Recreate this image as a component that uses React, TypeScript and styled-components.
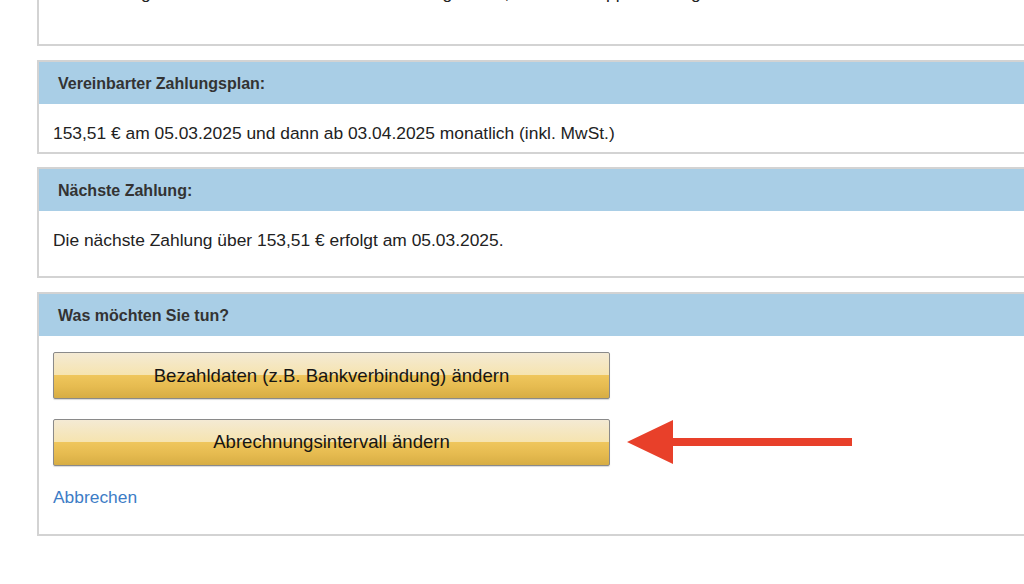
import { createGlobalStyle, styled } from "styled-components";

const GlobalStyle = createGlobalStyle`
    html, body {
        margin: 0;
        padding: 0;
        background: #ffffff;
        overflow: hidden;
    }
    body {
        font-family: "Liberation Sans", Arial, sans-serif;
        color: #222222;
    }
`;

const Page = styled.div`
    width: 1100px;
    margin-left: 37px;
    margin-top: -18px;
    display: flex;
    flex-direction: column;
`;

const Panel = styled.section<{ $gap?: number }>`
    border: 2px solid #d3d3d3;
    border-right: none;
    background: #ffffff;
    margin-top: ${(p) => p.$gap ?? 0}px;
`;

const PanelHeader = styled.div`
    height: 42px;
    box-sizing: border-box;
    padding: 2px 0 0 19px;
    background: #a9cee6;
    display: flex;
    align-items: center;
    font-size: 16px;
    font-weight: bold;
    color: #333333;
`;

const PanelBody = styled.div<{ $top?: number; $bottom?: number }>`
    padding: ${(p) => p.$top ?? 20}px 14px ${(p) => p.$bottom ?? 10}px;
    font-size: 17.4px;
    line-height: 18px;
    color: #222222;
    white-space: nowrap;
`;

const Actions = styled.div`
    display: flex;
    flex-direction: column;
    gap: 19px;
`;

const ActionRow = styled.div`
    display: flex;
    align-items: center;
    gap: 17px;
`;

const GoldButton = styled.button`
    width: 557px;
    height: 47px;
    border: 1px solid #8a8a8a;
    border-radius: 2px;
    background: linear-gradient(
        to bottom,
        #f4ead4 0%,
        #f6e4b0 48%,
        #efc65c 50%,
        #e6bb50 75%,
        #d7ad44 100%
    );
    box-shadow: 0 1px 1px rgba(0, 0, 0, 0.15);
    font-family: "Liberation Sans", Arial, sans-serif;
    font-size: 18.6px;
    color: #151515;
    cursor: pointer;
    padding: 0;
`;

const CancelLink = styled.a`
    display: inline-block;
    margin-top: 22px;
    font-size: 17.4px;
    line-height: 18px;
    color: #3d7cc6;
    text-decoration: none;
    cursor: pointer;
`;

function Arrow() {
    return (
        <svg width="226" height="48" viewBox="0 0 226 48" aria-hidden="true">
            <polygon points="0,24 46,2 46,20 225,20 225,28 46,28 46,46" fill="#e8402a" />
        </svg>
    );
}

export default function App() {
    return (
        <>
            <GlobalStyle />
            <Page>
                <Panel>
                    <PanelBody $top={0} $bottom={42}>
                        Ihre Zahlung wird automatisch von Ihrem Konto abgebucht, sobald Ihr Apple-Vertrag läuft.
                    </PanelBody>
                </Panel>
                <Panel $gap={14}>
                    <PanelHeader>Vereinbarter Zahlungsplan:</PanelHeader>
                    <PanelBody $bottom={10}>153,51 € am 05.03.2025 und dann ab 03.04.2025 monatlich (inkl. MwSt.)</PanelBody>
                </Panel>
                <Panel $gap={13}>
                    <PanelHeader>Nächste Zahlung:</PanelHeader>
                    <PanelBody $bottom={27}>Die nächste Zahlung über 153,51 € erfolgt am 05.03.2025.</PanelBody>
                </Panel>
                <Panel $gap={14}>
                    <PanelHeader>Was möchten Sie tun?</PanelHeader>
                    <PanelBody $top={16} $bottom={28}>
                        <Actions>
                            <ActionRow>
                                <GoldButton>Bezahldaten (z.B. Bankverbindung) ändern</GoldButton>
                            </ActionRow>
                            <ActionRow>
                                <GoldButton>Abrechnungsintervall ändern</GoldButton>
                                <Arrow />
                            </ActionRow>
                        </Actions>
                        <CancelLink>Abbrechen</CancelLink>
                    </PanelBody>
                </Panel>
            </Page>
        </>
    );
}
